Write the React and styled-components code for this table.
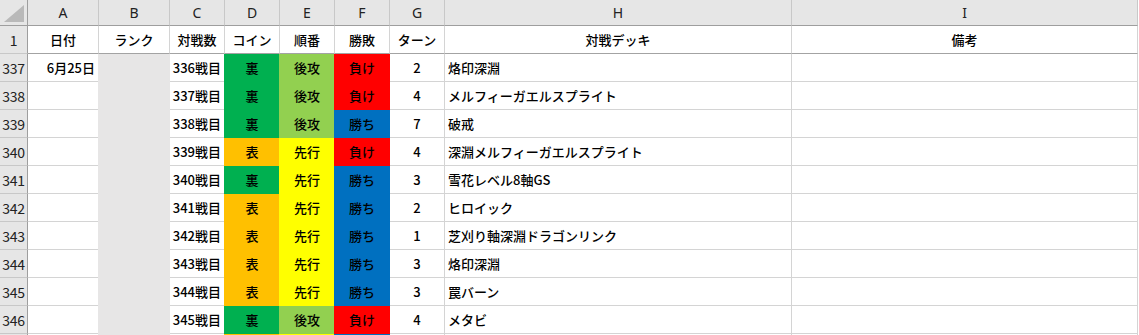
import React from 'react';
import styled, { createGlobalStyle } from 'styled-components';

const GlobalStyle = createGlobalStyle`
  html, body {
    margin: 0;
    padding: 0;
    background: #ffffff;
    overflow: hidden;
  }
  body {
    font-family: "Noto Sans CJK JP", "Noto Sans", sans-serif;
    color: #000;
  }
`;

const COLS = '28px 71px 71px 55px 55px 55px 55px 55px 347px 346px';

const FILLS = {
    裏: '#00b050',
    表: '#ffc000',
    後攻: '#92d050',
    先行: '#ffff00',
    負け: '#ff0000',
    勝ち: '#0070c0',
};

const Sheet = styled.div`
    width: 1139px;
    height: 335px;
    overflow: hidden;
    background: #fff;
`;

const Row = styled.div`
    display: grid;
    grid-template-columns: ${COLS};
    height: ${props => props.$height}px;
`;

const Corner = styled.div`
    position: relative;
    box-sizing: border-box;
    background: #e6e6e6;
    border-right: 1px solid #9e9e9e;
    border-bottom: 1px solid #9e9e9e;
`;

const CornerMark = styled.svg`
    position: absolute;
    left: 4px;
    top: 5px;
`;

const ColHead = styled.div`
    box-sizing: border-box;
    display: flex;
    align-items: center;
    justify-content: center;
    background: #e6e6e6;
    border-right: 1px solid #c8c8c8;
    border-bottom: 1px solid #9e9e9e;
    font-family: "Noto Sans", "Liberation Sans", sans-serif;
    font-size: 14px;
    color: #222;
`;

const RowHead = styled.div`
    box-sizing: border-box;
    display: flex;
    align-items: center;
    justify-content: center;
    background: #e6e6e6;
    border-right: 1px solid #9e9e9e;
    border-bottom: 1px solid #c8c8c8;
    font-size: 14px;
    color: #222;
    letter-spacing: -0.2px;
`;

const Cell = styled.div`
    box-sizing: border-box;
    display: flex;
    align-items: center;
    justify-content: ${props =>
        props.$align === 'right' ? 'flex-end' : props.$align === 'left' ? 'flex-start' : 'center'};
    padding: 0 3px 0 3px;
    font-size: 13px;
    font-weight: 500;
    white-space: nowrap;
    overflow: hidden;
    background: ${props => props.$fill || '#fff'};
    border-right: 1px solid ${props => props.$fill || '#d4d4d4'};
    border-bottom: 1px solid ${props => (props.$title ? '#a3a3a3' : props.$fill || '#d4d4d4')};
    box-shadow: ${props => (props.$fill ? `-1px 0 0 ${props.$fill}` : 'none')};
`;

const LETTERS = ['A', 'B', 'C', 'D', 'E', 'F', 'G', 'H', 'I'];
const TITLES = ['日付', 'ランク', '対戦数', 'コイン', '順番', '勝敗', 'ターン', '対戦デッキ', '備考'];

const rows = [
    [337, '6月25日', '336戦目', '裏', '後攻', '負け', 2, '烙印深淵'],
    [338, '', '337戦目', '裏', '後攻', '負け', 4, 'メルフィーガエルスプライト'],
    [339, '', '338戦目', '裏', '後攻', '勝ち', 7, '破戒'],
    [340, '', '339戦目', '表', '先行', '負け', 4, '深淵メルフィーガエルスプライト'],
    [341, '', '340戦目', '裏', '先行', '勝ち', 3, '雪花レベル8軸GS'],
    [342, '', '341戦目', '表', '先行', '勝ち', 2, 'ヒロイック'],
    [343, '', '342戦目', '表', '先行', '勝ち', 1, '芝刈り軸深淵ドラゴンリンク'],
    [344, '', '343戦目', '表', '先行', '勝ち', 3, '烙印深淵'],
    [345, '', '344戦目', '表', '先行', '勝ち', 3, '罠バーン'],
    [346, '', '345戦目', '裏', '後攻', '負け', 4, 'メタビ'],
];

const RANK_FILL = '#e7e6e6';

export default function App() {
    return (
        <Sheet>
            <GlobalStyle />
            <Row $height={26}>
                <Corner>
                    <CornerMark width="20" height="17" viewBox="0 0 20 17">
                        <polygon points="20,0 20,17 0,17" fill="#b9b9b9" />
                    </CornerMark>
                </Corner>
                {LETTERS.map(l => (
                    <ColHead key={l}>{l}</ColHead>
                ))}
            </Row>
            <Row $height={28}>
                <RowHead>1</RowHead>
                {TITLES.map(t => (
                    <Cell key={t} $title>
                        {t}
                    </Cell>
                ))}
            </Row>
            {rows.map(([num, date, count, coin, order, result, turn, deck]) => (
                <Row $height={28} key={num}>
                    <RowHead>{num}</RowHead>
                    <Cell $align="right">{date}</Cell>
                    <Cell $fill={RANK_FILL} />
                    <Cell $align="right">{count}</Cell>
                    <Cell $fill={FILLS[coin]}>{coin}</Cell>
                    <Cell $fill={FILLS[order]}>{order}</Cell>
                    <Cell $fill={FILLS[result]}>{result}</Cell>
                    <Cell>{turn}</Cell>
                    <Cell $align="left">{deck}</Cell>
                    <Cell />
                </Row>
            ))}
            <Row $height={28}>
                <RowHead />
                <Cell />
                <Cell $fill={RANK_FILL} />
                <Cell />
                <Cell $fill={FILLS['表']} />
                <Cell $fill={FILLS['先行']} />
                <Cell $fill={FILLS['勝ち']} />
                <Cell />
                <Cell />
                <Cell />
            </Row>
        </Sheet>
    );
}
